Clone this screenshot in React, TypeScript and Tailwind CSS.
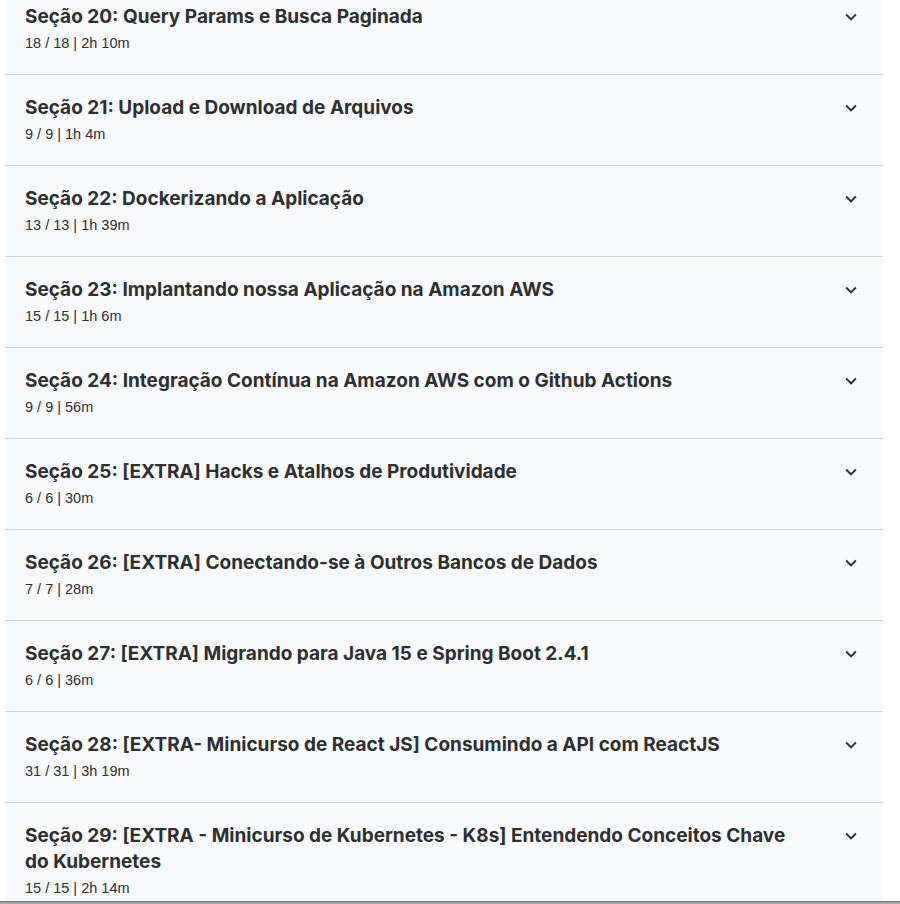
const sections = [
  { title: "Seção 20: Query Params e Busca Paginada", info: "18 / 18 | 2h 10m" },
  { title: "Seção 21: Upload e Download de Arquivos", info: "9 / 9 | 1h 4m" },
  { title: "Seção 22: Dockerizando a Aplicação", info: "13 / 13 | 1h 39m" },
  { title: "Seção 23: Implantando nossa Aplicação na Amazon AWS", info: "15 / 15 | 1h 6m" },
  { title: "Seção 24: Integração Contínua na Amazon AWS com o Github Actions", info: "9 / 9 | 56m" },
  { title: "Seção 25: [EXTRA] Hacks e Atalhos de Produtividade", info: "6 / 6 | 30m" },
  { title: "Seção 26: [EXTRA] Conectando-se à Outros Bancos de Dados", info: "7 / 7 | 28m" },
  { title: "Seção 27: [EXTRA] Migrando para Java 15 e Spring Boot 2.4.1", info: "6 / 6 | 36m" },
  { title: "Seção 28: [EXTRA- Minicurso de React JS] Consumindo a API com ReactJS", info: "31 / 31 | 3h 19m" },
  {
    title: "Seção 29: [EXTRA - Minicurso de Kubernetes - K8s] Entendendo Conceitos Chave do Kubernetes",
    info: "15 / 15 | 2h 14m",
  },
];

function ExpandMore() {
  return (
    <svg width="22" height="22" viewBox="0 0 24 24" className="shrink-0 fill-[#2d2f31]">
      <path d="M16.59 8.59L12 13.17 7.41 8.59 6 10l6 6 6-6z" />
    </svg>
  );
}

export default function App() {
  return (
    <div className="h-[904px] bg-white flex flex-col overflow-hidden">
      <div className="h-[901px] overflow-hidden">
        <div className="-mt-[16px] ml-[5px] w-[878px] bg-[#f7f9fa]">
          {sections.map((section, index) => (
            <div
              key={index}
              className="flex items-start justify-between gap-10 pl-5 pr-[21px] pt-[20px] pb-[21px] border-b border-[#d1d7dc]"
            >
              <div>
                <h3 className="font-['Inter',sans-serif] font-bold text-[19px] leading-[26px] text-[#2d2f31]">
                  {section.title}
                </h3>
                <p className="mt-[3px] font-['Liberation_Sans',Arial,sans-serif] text-[14.5px] leading-[20px] text-[#2d2f31]">
                  {section.info}
                </p>
              </div>
              <div className="pt-[2px]">
                <ExpandMore />
              </div>
            </div>
          ))}
        </div>
      </div>
      <div className="h-[3px] border-t border-[#6f6f6f] bg-[#a4a4a4]" />
    </div>
  );
}
